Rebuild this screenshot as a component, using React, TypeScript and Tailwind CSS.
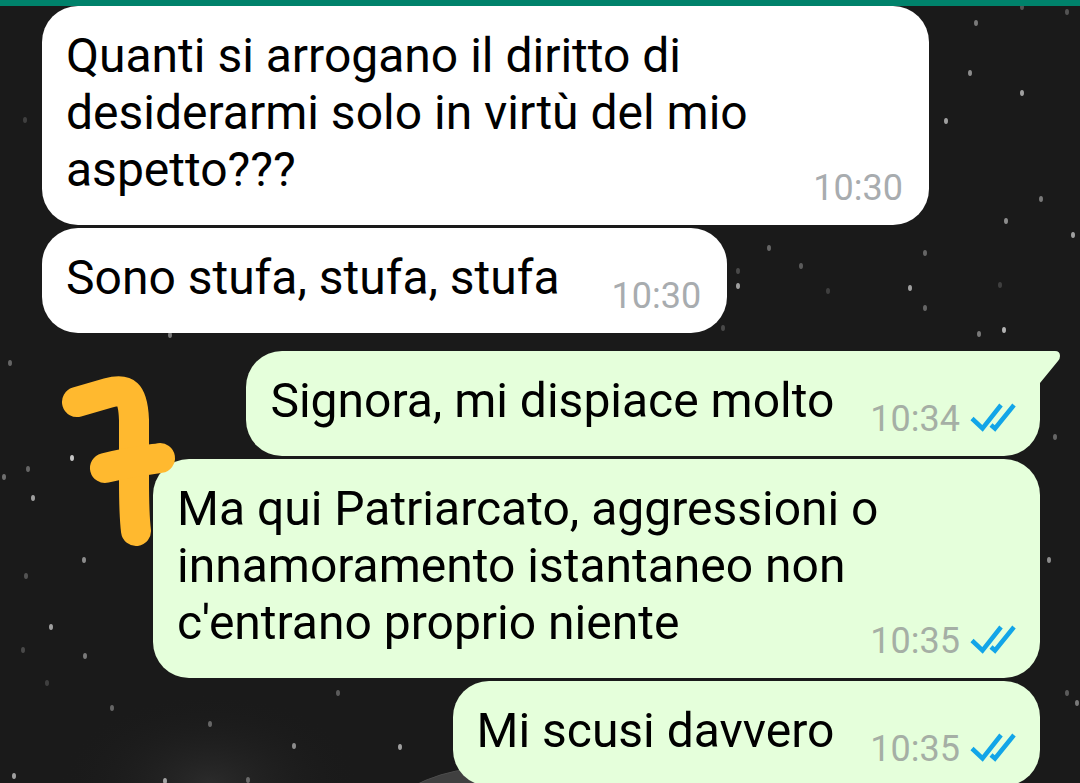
import { clsx } from 'clsx'

interface Message {
  id: number
  text: string
  time: string
  sent?: boolean
  tail?: boolean
}

const messages: Message[] = [
  { id: 1, text: 'Quanti si arrogano il diritto di desiderarmi solo in virtù del mio aspetto???', time: '10:30' },
  { id: 2, text: 'Sono stufa, stufa, stufa', time: '10:30' },
  { id: 3, text: 'Signora, mi dispiace molto', time: '10:34', sent: true, tail: true },
  { id: 4, text: "Ma qui Patriarcato, aggressioni o innamoramento istantaneo non c'entrano proprio niente", time: '10:35', sent: true },
  { id: 5, text: 'Mi scusi davvero', time: '10:35', sent: true },
]

// x, y, opacity
const stars = [
  [976, 23, 0.5], [1067, 12, 0.3], [1022, 7, 0.3], [970, 73, 0.6], [1022, 93, 0.7], [946, 121, 0.7],
  [1041, 199, 0.5], [1006, 221, 0.6], [1073, 235, 0.7], [925, 253, 0.4], [738, 271, 0.25],
  [738, 286, 0.7], [769, 248, 0.4], [801, 266, 0.35], [828, 291, 0.2], [910, 288, 0.7],
  [925, 308, 0.4], [979, 334, 0.5], [1004, 330, 0.8], [1000, 285, 0.2], [723, 328, 0.25],
  [1055, 437, 0.4], [1049, 560, 0.6], [170, 335, 0.5], [10, 363, 0.4], [72, 458, 0.9],
  [28, 469, 0.4], [4, 477, 0.45], [33, 498, 0.7], [84, 560, 0.6], [26, 576, 0.3],
  [51, 627, 0.7], [23, 650, 0.25], [85, 656, 0.5], [47, 683, 0.2], [112, 708, 0.4],
  [210, 724, 0.4], [338, 693, 0.35], [294, 746, 0.6], [400, 747, 0.7], [14, 776, 0.7],
  [165, 781, 0.7], [248, 780, 0.4], [1067, 693, 0.35], [1077, 703, 0.5], [25, 120, 0.2],
]

function Wallpaper() {
  return (
    <svg className="absolute inset-0 h-full w-full" aria-hidden="true">
      <defs>
        <radialGradient id="glow">
          <stop offset="0" stopColor="#2b2b2b" />
          <stop offset="1" stopColor="#1a1a1a" stopOpacity="0" />
        </radialGradient>
        <filter id="soft" x="-50%" y="-50%" width="200%" height="200%">
          <feGaussianBlur stdDeviation="0.7" />
        </filter>
      </defs>
      <ellipse cx="210" cy="783" rx="150" ry="90" fill="url(#glow)" />
      <circle cx="487" cy="927" r="159" fill="#3f3f3f" stroke="#4c4c4c" filter="url(#soft)" />
      <g fill="#d8d8d8" filter="url(#soft)">
        {stars.map(([x, y, opacity]) => (
          <ellipse key={`${x}-${y}`} cx={x} cy={y} rx="2" ry="3" opacity={opacity} />
        ))}
      </g>
    </svg>
  )
}

function ReadTicks() {
  return (
    <svg
      className="mt-1 h-8 w-12"
      viewBox="0 0 48 32"
      fill="none"
      stroke="#12a5e8"
      strokeWidth="4.5"
      role="img"
      aria-label="Read"
    >
      <path d="M4 16.500 14.500 26.500 33 3" />
      <path d="M23 23 27 26.500 46 3" />
    </svg>
  )
}

function Tail() {
  return (
    <svg className="absolute left-full top-0 -ml-px h-8 w-[22px]" viewBox="0 0 22 32" fill="#e5ffdb" aria-hidden="true">
      <path d="M0 0H16Q21 0 21 5Q21 8 19 10L1 32H0Z" />
    </svg>
  )
}

function Bubble({ message }: { message: Message }) {
  const { text, time, sent, tail } = message
  return (
    <li
      className={clsx(
        'relative flow-root w-fit max-w-[887px] rounded-[36px] pt-[21px] pb-4 pl-6',
        sent ? 'self-end bg-[#e5ffdb] pr-6' : 'self-start bg-white pr-[26px]',
        tail && 'mt-[15px] rounded-tr-none'
      )}
    >
      {text}
      <span
        className={clsx(
          'float-right mt-[26px] flex items-start gap-2 text-[36px] leading-[42px]',
          sent ? 'ml-9 text-[#a5afa5]' : 'ml-[52px] text-[#a8acaf]'
        )}
      >
        <time>{time}</time>
        {sent && <ReadTicks />}
      </span>
      {tail && <Tail />}
    </li>
  )
}

function HandDrawnSeven() {
  return (
    <svg
      className="absolute left-[60px] top-[370px] h-[180px] w-[120px]"
      viewBox="60 370 120 180"
      fill="none"
      stroke="#ffb92f"
      strokeWidth="30"
      strokeLinecap="round"
      strokeLinejoin="round"
      role="img"
      aria-label="7"
    >
      <path d="M77 402 108 393C126 388 133 392 134 420V480C134 505 134 515 136 531" />
      <path d="M105 468C125 463 140 461 160 458" />
    </svg>
  )
}

export default function App() {
  return (
    <main className="relative h-screen overflow-hidden bg-[#1a1a1a] font-['Roboto',sans-serif] text-5xl leading-[57px] text-black">
      <Wallpaper />
      <header className="relative h-1.5 bg-[#00826b]" />
      <ul className="relative flex flex-col gap-[3px] pl-[42px] pr-10">
        {messages.map(message => (
          <Bubble key={message.id} message={message} />
        ))}
      </ul>
      <HandDrawnSeven />
    </main>
  )
}
